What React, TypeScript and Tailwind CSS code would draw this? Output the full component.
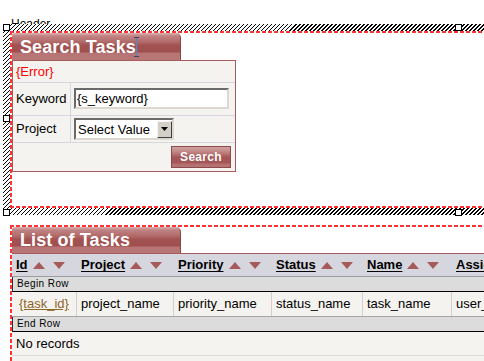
import React from "react";

function Up() {
  return (
    <svg width="12" height="7" viewBox="0 0 12 7" className="block">
      <path d="M6 0 L12 7 L0 7 Z" fill="#a65a5a" />
    </svg>
  );
}
function Down() {
  return (
    <svg width="12" height="7" viewBox="0 0 12 7" className="block">
      <path d="M0 0 L12 0 L6 7 Z" fill="#a65a5a" />
    </svg>
  );
}

function Handle({ className }: { className: string }) {
  return <div className={"absolute w-[7px] h-[7px] bg-white border border-black " + className} />;
}

function Tab({ title, tall, cursor }: { title: string; tall: boolean; cursor?: boolean }) {
  return (
    <div
      className={
        "relative w-[169px] flex items-center pl-[8px] rounded-tr-[5px] rounded-tl-[3px] border-r border-[#8c4646] text-white font-bold text-[18px] leading-none bg-[linear-gradient(to_bottom,#dcb4b4_0px,#c08282_3px,#b46e6e_8px,#ad6464_10px,#a35252_12px,#a04f4f_19px,#b67474_20px,#b87676_27px)] " +
        (tall ? "h-[27px]" : "h-[26px]")
      }
    >
      <span className="tracking-[0.1px]">{title}</span>
      {cursor && (
        <svg width="5" height="20" viewBox="0 0 5 20" className="absolute left-[122px] top-[4px]">
          <path d="M0 0.5 H5 M0 19.5 H5" stroke="#3a4660" strokeWidth="1" />
          <path d="M2.5 1 V19" stroke="#5a84c8" strokeWidth="1.4" />
        </svg>
      )}
    </div>
  );
}

function SearchForm() {
  return (
    <div>
      <Tab title="Search Tasks" tall cursor />
      <div className="w-[224px] border border-[#a45c5e] bg-[#f5f3ef] text-[13px]">
        <div className="h-[22px] flex items-center pl-[3px] text-[#ff0000] border-b border-[#d6d6de]">{"{Error}"}</div>
        <div className="h-[33px] flex border-b border-[#d6d6de]">
          <div className="w-[58px] flex items-center pl-[3px] border-r border-[#d6d6de]">Keyword</div>
          <div className="pl-[3px] pt-[5px]">
            <div className="w-[155px] h-[21px] bg-white border-2 border-t-[#6a6a6a] border-l-[#6a6a6a] border-r-[#dcd8d0] border-b-[#dcd8d0] flex items-center pl-[1px] leading-none">
              {"{s_keyword}"}
            </div>
          </div>
        </div>
        <div className="h-[27px] flex border-b border-[#d6d6de]">
          <div className="w-[58px] flex items-center pl-[3px] border-r border-[#d6d6de]">Project</div>
          <div className="pl-[3px] pt-[2px]">
            <div className="w-[100px] h-[22px] bg-white border-2 border-t-[#6a6a6a] border-l-[#6a6a6a] border-r-[#dcd8d0] border-b-[#dcd8d0] flex items-center pl-[2px] leading-none">
              <span className="flex-1">Select Value</span>
              <div className="w-[15px] h-[17px] bg-[#d4d0c8] border border-t-[#f4f4f4] border-l-[#f4f4f4] border-r-[#404040] border-b-[#404040] flex items-center justify-center">
                <svg width="7" height="4" viewBox="0 0 7 4">
                  <path d="M0 0 H7 L3.5 4 Z" fill="#000" />
                </svg>
              </div>
            </div>
          </div>
        </div>
        <div className="h-[28px] flex items-center justify-end pr-[4px]">
          <div className="w-[60px] h-[22px] border border-[#8c4a4a] flex items-center justify-center text-white font-bold text-[12px] leading-none tracking-[0.3px] bg-[linear-gradient(to_bottom,#d2a2a2_0px,#c48c8c_4px,#b06a6a_8px,#a45656_10px,#a45656_16px,#b47070_17px,#b87676_22px)]">
            Search
          </div>
        </div>
      </div>
    </div>
  );
}

const cols = [
  { name: "Id", w: "w-[65px]", data: "{task_id}" },
  { name: "Project", w: "w-[97px]", data: "project_name" },
  { name: "Priority", w: "w-[98px]", data: "priority_name" },
  { name: "Status", w: "w-[91px]", data: "status_name" },
  { name: "Name", w: "w-[89px]", data: "task_name" },
  { name: "Assigned To", w: "w-[120px]", data: "user_name" },
];

function TaskList() {
  return (
    <div>
      <Tab title="List of Tasks" tall={false} />
      <div className="w-[880px] text-[13px]">
        <div className="h-[24px] flex border-t border-[#a45c5e] border-b border-b-[#9c9ca4] bg-[#d6d6de]">
          {cols.map((c) => (
            <div key={c.name} className={"flex items-center shrink-0 pl-[4px] " + c.w}>
              <span className="font-bold underline underline-offset-[2px] whitespace-nowrap">{c.name}</span>
              <span className="ml-[5px]"><Up /></span>
              <span className="ml-[8px]"><Down /></span>
            </div>
          ))}
        </div>
        <div className="h-[15px] flex items-center pl-[4px] bg-[#dcdcdc] border-b border-black text-[10px] leading-none tracking-[0.4px] border-l border-l-[#303030]">
          Begin Row
        </div>
        <div className="h-[25px] flex bg-[#f5f3ef] border-b border-[#a4a4a4]">
          {cols.map((c, i) => (
            <div
              key={c.name}
              className={"flex items-center shrink-0 border-r border-[#d0d0d0] " + c.w + (i === 0 ? " pl-[7px]" : " pl-[4px]")}
            >
              {i === 0 ? (
                <span className="text-[#8e6428] underline">{c.data}</span>
              ) : (
                <span className="whitespace-nowrap">{c.data}</span>
              )}
            </div>
          ))}
        </div>
        <div className="h-[15px] flex items-center pl-[4px] bg-[#dcdcdc] border-b border-black text-[10px] leading-none tracking-[0.4px] border-l border-l-[#303030]">
          End Row
        </div>
        <div className="h-[24px] flex items-center pl-[4px] bg-[#f5f3ef] border-b border-[#dadada]">No records</div>
        <div className="h-[30px] bg-[#f5f3ef]" />
      </div>
    </div>
  );
}

const DASHED =
  "p-[2px] [background:repeating-linear-gradient(90deg,#ff3333_0px,#ff3333_4px,transparent_4px,transparent_6px)_top/100%_2px_no-repeat,repeating-linear-gradient(90deg,#ff3333_0px,#ff3333_4px,transparent_4px,transparent_6px)_bottom/100%_2px_no-repeat,repeating-linear-gradient(180deg,#ff3333_0px,#ff3333_4px,transparent_4px,transparent_6px)_left/2px_100%_no-repeat,repeating-linear-gradient(180deg,#ff3333_0px,#ff3333_4px,transparent_4px,transparent_6px)_right/2px_100%_no-repeat,#fff]";

export default function App() {
  return (
    <div className="w-[484px] h-[361px] overflow-hidden bg-white font-['Liberation_Sans',Arial,sans-serif] text-black">
      <div className="h-[24px] pt-[17px] pl-[11px] text-[12px] leading-[14px] whitespace-nowrap">Header</div>
      <div className="relative ml-[3px] w-[910px] p-[7px] bg-[image:repeating-linear-gradient(135deg,#000_0px,#000_1.3px,#fff_1.3px,#fff_2.83px)]">
        <div className={"h-[177px] " + DASHED}>
          <SearchForm />
        </div>
        <Handle className="left-0 top-0" />
        <Handle className="left-0 top-[91px]" />
        <Handle className="left-0 top-[185px]" />
        <Handle className="left-[452px] top-0" />
        <Handle className="left-[452px] top-[185px]" />
      </div>
      <div className={"mt-[10px] ml-[10px] w-[900px] " + DASHED}>
        <TaskList />
      </div>
    </div>
  );
}
